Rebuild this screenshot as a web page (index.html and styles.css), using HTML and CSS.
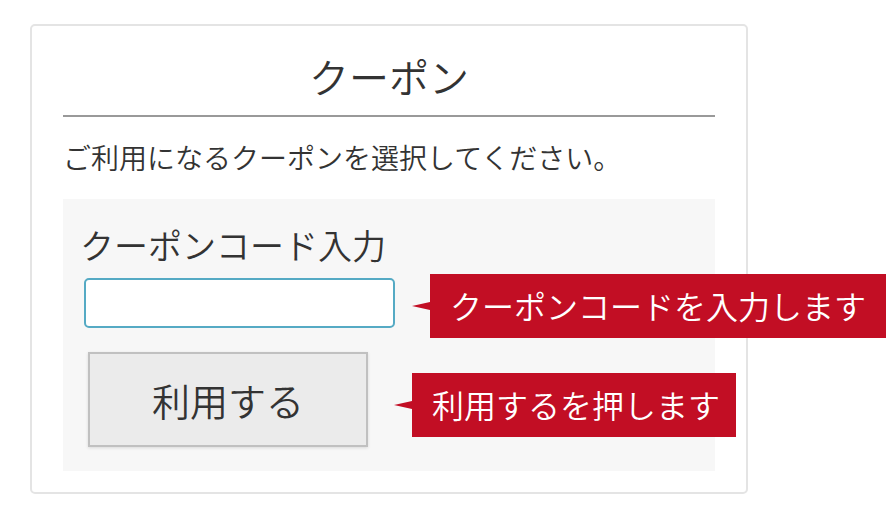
FILE: index.html
```html
<!DOCTYPE html>
<html lang="ja">
<head>
    <meta charset="UTF-8">
    <title>クーポン</title>
    <link rel="stylesheet" href="styles.css">
</head>
<body>
    <div class="card">
        <h1 class="card-title">クーポン</h1>
        <p class="lead">ご利用になるクーポンを選択してください。</p>

        <div class="code-box">
            <label class="code-label" for="coupon-code">クーポンコード入力</label>
            <input id="coupon-code" class="code-input" type="text">
            <button class="use-button" type="button">利用する</button>
        </div>
    </div>

    <div class="callout callout-input">クーポンコードを入力します</div>
    <div class="callout callout-button">利用するを押します</div>
</body>
</html>
```

FILE: styles.css
```css
html, body {
    margin: 0;
    padding: 0;
    background: #fff;
}
body {
    position: relative;
    width: 886px;
    height: 516px;
    overflow: hidden;
    font-family: "Noto Sans CJK JP", "Noto Sans", sans-serif;
    font-weight: 350;
    color: #333;
}
.card {
    box-sizing: border-box;
    width: 718px;
    margin: 24px 0 0 30px;
    padding: 20px 31px 21px;
    border: 2px solid #e4e4e4;
    border-radius: 5px;
}
.card-title {
    margin: 0;
    padding-bottom: 9px;
    border-bottom: 2px solid #999;
    font-size: 40px;
    font-weight: 350;
    line-height: 60px;
    text-align: center;
}
.lead {
    margin: 19px 0 21px;
    font-size: 28px;
    line-height: 42px;
}
.code-box {
    display: flex;
    flex-direction: column;
    align-items: flex-start;
    height: 272px;
    box-sizing: border-box;
    padding: 22px 20px 24px;
    background: #f7f7f7;
}
.code-label {
    margin-left: -3px;
    font-size: 34px;
    line-height: 48px;
}
.code-input {
    box-sizing: border-box;
    width: 311px;
    height: 50px;
    margin: 9px 0 0 1px;
    border: 2px solid #55aac4;
    border-radius: 5px;
    background: #fff;
    outline: none;
}
.use-button {
    box-sizing: border-box;
    width: 280px;
    height: 95px;
    margin: 24px 0 0 5px;
    border: 2px solid #c0c0c0;
    background: #ebebeb;
    box-shadow: 0 1px 3px rgba(0, 0, 0, 0.12);
    font-family: inherit;
    font-weight: 350;
    font-size: 38px;
    color: #333;
    cursor: pointer;
}

/* annotations laid over the screenshot */
.callout {
    position: absolute;
    box-sizing: border-box;
    height: 64px;
    padding-left: 20px;
    background: #c20e24;
    color: #fff;
    font-size: 32px;
    line-height: 62px;
    white-space: nowrap;
}
.callout::before {
    content: "";
    position: absolute;
    left: -18px;
    top: 28px;
    width: 18px;
    height: 8px;
    background: #c20e24;
    clip-path: polygon(0 50%, 100% 0, 100% 100%);
}
.callout-input {
    left: 430px;
    top: 274px;
    width: 460px;
}
.callout-button {
    left: 412px;
    top: 373px;
    width: 324px;
}
```
